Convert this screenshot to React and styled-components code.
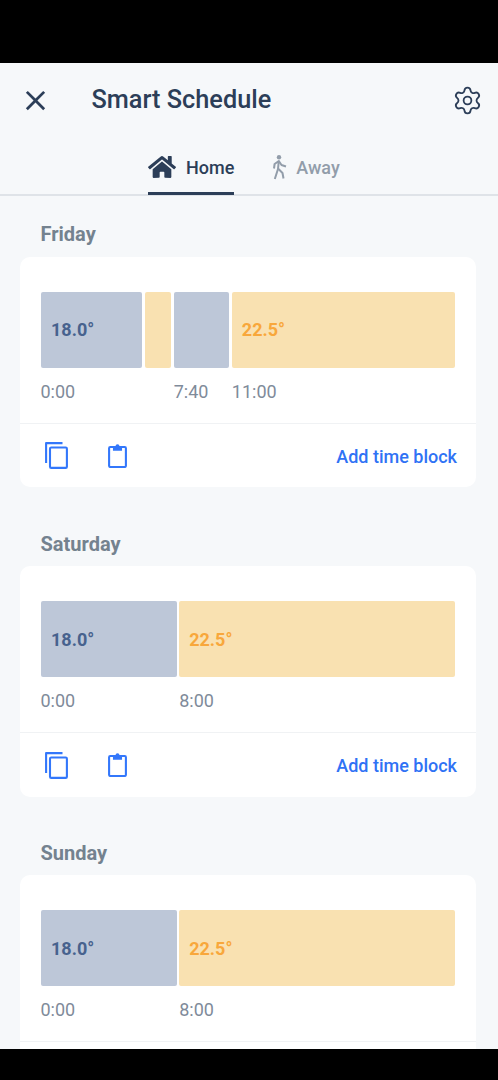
import React from 'react';
import styled, { createGlobalStyle } from 'styled-components';
import { FaHome } from 'react-icons/fa';
import { MdClose } from 'react-icons/md';
import { Settings } from 'lucide-react';

const Global = createGlobalStyle`
  html, body { margin: 0; padding: 0; background: #000; }
  body { font-family: Roboto, "Liberation Sans", sans-serif; }
  * { box-sizing: border-box; }
`;

const Screen = styled.div`
  width: 498px; height: 1080px; background: #000;
  padding: 63px 0 31px; overflow: hidden;
`;
const Page = styled.main`
  height: 986px; background: #f6f8fa; overflow: hidden;
`;
const TopBar = styled.header`
  height: 74px; display: flex; align-items: center;
  padding: 0 15px 0 18px; color: #2c3e58;
`;
const CloseButton = styled.div`
  width: 35px; height: 35px; display: flex; align-items: center; justify-content: center;
  margin-right: 38.5px;
`;
const Title = styled.h1`
  flex: 1; margin: 0; font-size: 25.3px; font-weight: 500; line-height: 30px; color: #2c3e58;
`;
const Tabs = styled.nav`
  height: 59px; padding: 8px 0 0 148px;
  display: flex; gap: 38px;
  border-bottom: 2px solid #dfe3e8;
`;
const Tab = styled.div`
  height: 50px; display: flex; align-items: center; gap: ${p => p.$gap}px;
  margin-bottom: -1px;
  font-size: 18px; font-weight: 500; padding-bottom: ${p => (p.$active ? 3 : 2)}px;
  color: ${p => (p.$active ? '#2c3e58' : '#929daa')};
  border-bottom: 3px solid ${p => (p.$active ? '#2c3e58' : 'transparent')};
`;
const DayBlock = styled.section`
  padding: 0 20px; margin-bottom: 18px;
`;
const DayLabel = styled.h2`
  margin: 0; padding: 0 0 10.5px 20.5px; height: 60.75px; display: flex; align-items: flex-end;
  font-size: 20px; line-height: 24px; font-weight: 700; color: #74828f;
`;
const Card = styled.div`
  width: 456px; height: 230.5px; background: #fff; border-radius: 10px; overflow: hidden;
`;
const Timeline = styled.div`
  height: 167px; padding: 35px 20.5px 0; display: flex; gap: 2.7px;
  border-bottom: 1px solid #f0f2f4;
`;
const Segment = styled.div`
  width: ${p => p.$w}px; flex: none;
`;
const Block = styled.div`
  height: 76px; border-radius: 2px; display: flex; align-items: center;
  padding-left: ${p => p.$pad}px;
  font-size: 18px; font-weight: 700;
  background: ${p => (p.$warm ? '#f9e1b1' : '#bdc7d8')};
  color: ${p => (p.$warm ? '#f8a73b' : '#47628e')};
`;
const TimeLabel = styled.div`
  margin-top: 13px; height: 21px; line-height: 21px; font-size: 18px; color: #7f8b9a;
  white-space: nowrap;
`;
const Actions = styled.div`
  height: 64px; display: flex; align-items: center; padding: 0 19px 0 24.5px;
`;
const IconSlot = styled.div`
  width: 63px; display: flex; align-items: center; height: 30px;
`;
const AddLink = styled.div`
  margin-left: auto; padding-top: 1px; font-size: 18px; font-weight: 500; color: #2f72f5;
`;

const CopyIcon = () => (
  <svg width="23" height="27" viewBox="0 0 23 27" fill="none" stroke="#3377fb" strokeWidth="2.1">
    <path d="M1.1 21V1.1H17.5" strokeLinejoin="round" />
    <rect x="5" y="5.5" width="16.9" height="20.4" rx="1.2" />
  </svg>
);
const ClipIcon = () => (
  <svg width="19" height="24" viewBox="0 0 19 24" fill="none" stroke="#3377fb" strokeWidth="2.1">
    <rect x="1.1" y="3" width="16.8" height="20" rx="1.2" />
    <path d="M6 3V5.6H13V3" fill="#3377fb" />
    <circle cx="9.5" cy="2.2" r="2" fill="#3377fb" stroke="none" />
  </svg>
);
const WalkIcon = () => (
  <svg width="15" height="25" viewBox="0 0 15 25" fill="none" stroke="#929daa" strokeWidth="2" strokeLinejoin="round">
    <circle cx="7" cy="2.3" r="2.2" fill="#929daa" stroke="none" />
    <path d="M2 13.5L2.6 9L6.8 6L6 14L2.8 24" />
    <path d="M6.8 6L9.5 10L14 11.5" />
    <path d="M6.5 14L10.5 18L11.5 23.5" />
  </svg>
);

const days = [
  {
    name: 'Friday',
    actions: true,
    segs: [
      { w: 101.8, temp: '18.0°', time: '0:00' },
      { w: 26, warm: true },
      { w: 55.5, time: '7:40' },
      { w: 223, warm: true, temp: '22.5°', time: '11:00' },
    ],
  },
  {
    name: 'Saturday',
    actions: true,
    segs: [
      { w: 136, temp: '18.0°', time: '0:00' },
      { w: 275.5, warm: true, temp: '22.5°', time: '8:00' },
    ],
  },
  {
    name: 'Sunday',
    actions: false,
    segs: [
      { w: 136, temp: '18.0°', time: '0:00' },
      { w: 275.5, warm: true, temp: '22.5°', time: '8:00' },
    ],
  },
];

export default function App() {
  return (
    <Screen>
      <Global />
      <Page>
        <TopBar>
          <CloseButton><MdClose size={33} /></CloseButton>
          <Title>Smart Schedule</Title>
          <Settings size={31} strokeWidth={1.4} />
        </TopBar>
        <Tabs>
          <Tab $active $gap={10}><FaHome size={28} />Home</Tab>
          <Tab $gap={9}><WalkIcon />Away</Tab>
        </Tabs>
        {days.map(d => (
          <DayBlock key={d.name}>
            <DayLabel>{d.name}</DayLabel>
            <Card>
              <Timeline>
                {d.segs.map((s, i) => (
                  <Segment key={i} $w={s.w}>
                    <Block $warm={s.warm} $pad={s.warm ? 10 : 10.5}>{s.temp}</Block>
                    {s.time && <TimeLabel>{s.time}</TimeLabel>}
                  </Segment>
                ))}
              </Timeline>
              {d.actions && (
                <Actions>
                  <IconSlot><CopyIcon /></IconSlot>
                  <IconSlot><ClipIcon /></IconSlot>
                  <AddLink>Add time block</AddLink>
                </Actions>
              )}
            </Card>
          </DayBlock>
        ))}
      </Page>
    </Screen>
  );
}
